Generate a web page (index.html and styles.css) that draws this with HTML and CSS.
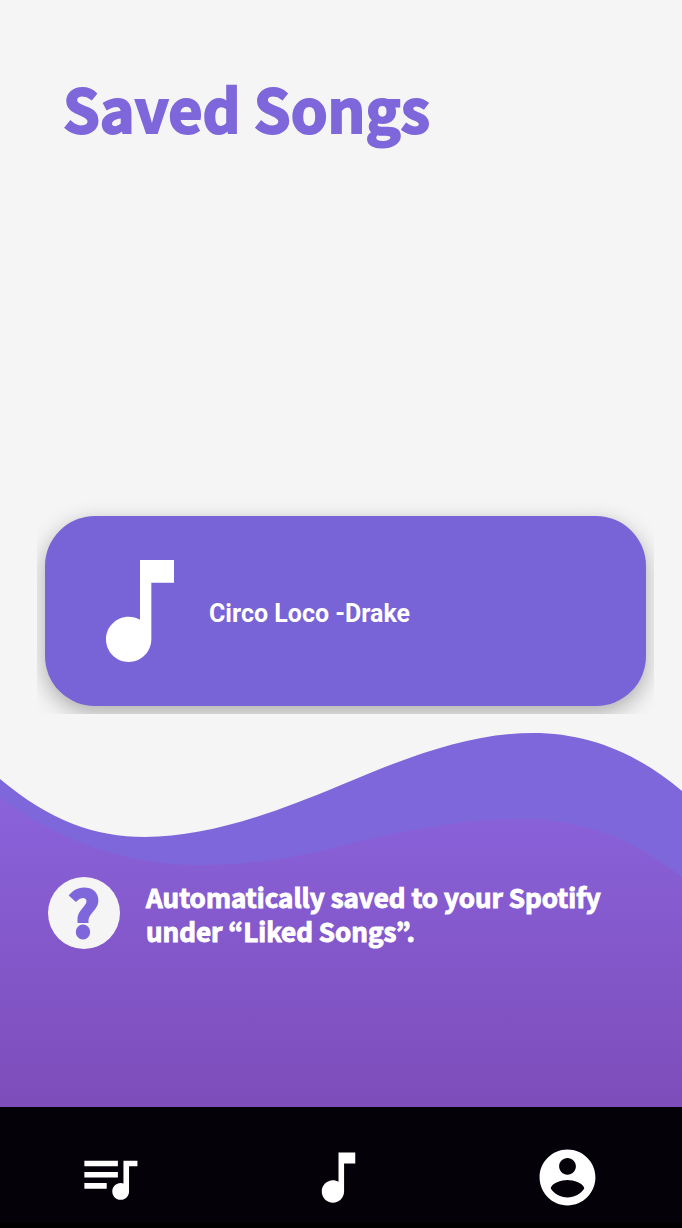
FILE: index.html
```html
<!DOCTYPE html>
<html lang="en">
<head>
<meta charset="utf-8">
<meta name="viewport" content="width=device-width, initial-scale=1">
<title>Saved Songs</title>
<link rel="stylesheet" href="styles.css">
</head>
<body>
<div class="app">
  <main class="main">
    <h1 class="title">Saved Songs</h1>
    <div class="song-list">
      <article class="song">
        <svg class="song-icon" viewBox="0 0 24 24" aria-hidden="true"><path d="M12 3v10.55c-.59-.34-1.27-.55-2-.55-2.21 0-4 1.79-4 4s1.79 4 4 4 4-1.79 4-4V7h4V3h-6z"/></svg>
        <span class="song-name">Circo Loco -Drake</span>
      </article>
    </div>
  </main>
  <section class="info">
    <svg class="wave" viewBox="0 0 682 374" preserveAspectRatio="none" aria-hidden="true">
      <defs>
        <linearGradient id="fade" x1="0" y1="0" x2="0" y2="1">
          <stop offset="0" stop-color="#8a62da"/>
          <stop offset="1" stop-color="#7d4dba"/>
        </linearGradient>
      </defs>
      <path fill="#7e66db" d="M0 46C50 88 95 104 145 104C205 104 270 82 341 52C410 23 470 0 533 0C585 0 635 18 682 58V374H0Z"/>
      <path fill="url(#fade)" d="M0 64C60 110 130 132 200 132C250 132 290 126 341 113C405 97 460 86 523 86C580 86 630 104 682 144V374H0Z"/>
    </svg>
    <div class="note">
      <span class="help">?</span>
      <p class="note-text">Automatically saved to your Spotify under “Liked Songs”.</p>
    </div>
  </section>
  <nav class="nav">
    <button class="nav-item" type="button" aria-label="Queue"><svg class="nav-icon" viewBox="0 0 24 24"><path d="M15 6H3v2h12V6zm0 4H3v2h12v-2zM3 16h8v-2H3v2zM17 6v8.18c-.31-.11-.65-.18-1-.18-1.66 0-3 1.34-3 3s1.34 3 3 3 3-1.34 3-3V8h3V6h-5z"/></svg></button>
    <button class="nav-item" type="button" aria-label="Songs"><svg class="nav-icon" viewBox="0 0 24 24"><path d="M12 3v10.55c-.59-.34-1.27-.55-2-.55-2.21 0-4 1.79-4 4s1.79 4 4 4 4-1.79 4-4V7h4V3h-6z"/></svg></button>
    <button class="nav-item" type="button" aria-label="Account"><svg class="nav-icon" viewBox="0 0 24 24"><path d="M12 2C6.48 2 2 6.48 2 12s4.48 10 10 10 10-4.48 10-10S17.52 2 12 2zm0 3c1.66 0 3 1.34 3 3s-1.34 3-3 3-3-1.34-3-3 1.34-3 3-3zm0 14.2c-2.5 0-4.71-1.28-6-3.22.03-1.99 4-3.08 6-3.08 1.99 0 5.97 1.09 6 3.08-1.29 1.94-3.5 3.22-6 3.22z"/></svg></button>
  </nav>
</div>
</body>
</html>
```

FILE: styles.css
```css
* {
  box-sizing: border-box;
}

body {
  margin: 0;
  background: #f5f5f5;
  font-family: "Noto Sans CJK JP", "Open Sans", sans-serif;
  font-weight: 700;
}

.app {
  min-height: 100vh;
  display: flex;
  flex-direction: column;
}

.main {
  flex: 1;
  display: flex;
  flex-direction: column;
  justify-content: space-between;
  padding: 68px 28px 19px 37px;
}

.title {
  margin: 0;
  padding-left: 26px;
  color: #7e66db;
  font-size: 59px;
  line-height: 80px;
  -webkit-text-stroke: 2px currentColor;
}

/* The card's shadow is cut off at the edge of the list. */
.song-list {
  padding: 16px 8px 8px;
  overflow: hidden;
}

.song {
  display: flex;
  align-items: center;
  min-height: 190px;
  padding: 0 27px;
  border-radius: 50px;
  background: #7864d6;
  box-shadow: 0 7px 22px rgba(0, 0, 0, 0.3);
  color: #fff;
}

.song-icon {
  width: 136px;
  height: 136px;
  flex: none;
  fill: currentColor;
}

.song-name {
  padding: 5px 0 0 1px;
  font-family: Roboto, sans-serif;
  font-size: 25px;
  line-height: 32px;
}

.info {
  display: grid;
}

.wave,
.note {
  grid-area: 1 / 1;
}

.wave {
  width: 100%;
  height: 374px;
}

.note {
  display: flex;
  align-items: flex-start;
  gap: 26px;
  padding: 144px 48px 24px;
}

.help {
  width: 72px;
  height: 72px;
  flex: none;
  border-radius: 50%;
  background: #f5f5f5;
  color: #7e66db;
  font-size: 62px;
  line-height: 66px;
  text-align: center;
  -webkit-text-stroke: 3px currentColor;
}

.note-text {
  margin: 3px 0 0;
  color: #fff;
  font-size: 26px;
  line-height: 34px;
  -webkit-text-stroke: 1px currentColor;
}

.nav {
  display: flex;
  justify-content: space-between;
  padding: 37px 81px 12px 76px;
  border-bottom: 5px solid #000;
  background: #040108;
}

.nav-item {
  display: flex;
  padding: 0;
  border: 0;
  background: none;
  color: #fff;
}

.nav-icon {
  width: 67px;
  height: 67px;
  fill: currentColor;
}
```
